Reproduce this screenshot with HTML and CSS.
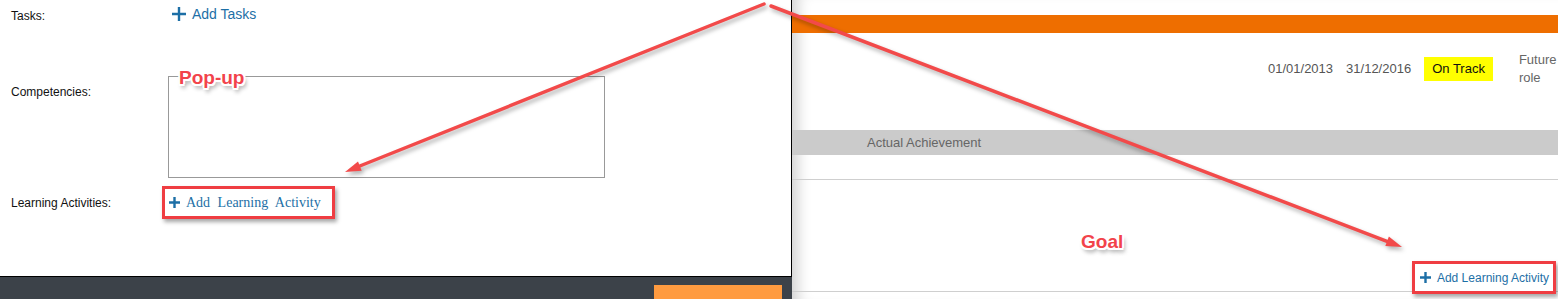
FILE: index.html
```html
<!DOCTYPE html>
<html>
<head>
<meta charset="utf-8">
<link rel="stylesheet" href="styles.css">
</head>
<body>
<div class="screen">
  <section class="popup">
    <div class="popup-body">
      <div class="row row-tasks">
        <div class="label">Tasks:</div>
        <a class="add-link">
          <svg class="plus plus-lg" viewBox="0 0 14 14"><path d="M7 0V14M0 7H14"/></svg>
          <span>Add Tasks</span>
        </a>
      </div>
      <div class="row row-comp">
        <div class="label">Competencies:</div>
        <div class="comp-box"></div>
      </div>
      <div class="row row-learn">
        <div class="label">Learning Activities:</div>
        <a class="add-link serif boxed">
          <svg class="plus plus-sm" viewBox="0 0 11 11"><path d="M5.5 0V11M0 5.5H11"/></svg>
          <span>Add Learning Activity</span>
        </a>
      </div>
    </div>
    <footer class="popup-footer">
      <div class="btn-orange"></div>
    </footer>
  </section>

  <section class="goal">
    <div class="orange-bar"></div>
    <div class="info-row">
      <span class="date">01/01/2013</span>
      <span class="date">31/12/2016</span>
      <span class="status">On Track</span>
      <span class="future">Future<br>role</span>
    </div>
    <div class="grey-bar">Actual Achievement</div>
    <div class="spacer"></div>
    <div class="learn-area">
      <a class="add-link small boxed">
        <svg class="plus plus-sm" viewBox="0 0 11 11"><path d="M5.5 0V11M0 5.5H11"/></svg>
        <span>Add Learning Activity</span>
      </a>
    </div>
  </section>

  <div class="note note-popup">Pop-up</div>
  <div class="note note-goal">Goal</div>

  <svg class="arrows" viewBox="0 0 1558 299" width="1558" height="299">
    <line x1="764" y1="4" x2="359.8" y2="166" />
    <polygon points="345,172 361.7,170.7 358,161.4" />
    <line x1="771" y1="6" x2="1387" y2="241.3" />
    <polygon points="1402,247 1385.3,246 1388.9,236.6" />
  </svg>
</div>
</body>
</html>
```

FILE: styles.css
```css
* { box-sizing: border-box; }
html, body { margin: 0; padding: 0; background: #fff; }
body {
  font-family: Arial, "Liberation Sans", Helvetica, sans-serif;
  width: 1558px;
  height: 299px;
  overflow: hidden;
}
.screen {
  position: relative;
  display: flex;
  width: 1558px;
  height: 299px;
}

/* ---------- Popup (left) ---------- */
.popup {
  width: 792px;
  flex: none;
  display: flex;
  flex-direction: column;
  background: #fff;
}
.popup-body {
  flex: none;
  height: 276px;
  border-right: 1px solid #000;
}
.row {
  display: grid;
  grid-template-columns: 168px 1fr;
  align-items: center;
}
.label {
  padding-left: 11px;
  font-size: 12px;
  color: #111;
}
.row-tasks { margin-top: 4px; height: 20px; }
.row-tasks .label { padding-top: 4px; }
.row-comp { margin-top: 52px; align-items: start; }
.row-comp .label { padding-top: 8px; line-height: 16px; }
.comp-box {
  width: 437px;
  height: 102px;
  border: 1px solid #999;
}
.row-learn { margin-top: 8px; height: 33px; }

.add-link {
  display: inline-flex;
  align-items: center;
  color: #1d6fa6;
  font-size: 14px;
  line-height: 20px;
  justify-self: start;
}
.add-link .plus { stroke: #1d6fa6; stroke-width: 2.4; fill: none; flex: none; }
.plus-lg { width: 14px; height: 14px; margin-left: 4px; margin-right: 6px; }
.plus-sm { width: 11px; height: 11px; margin-right: 6px; }
.add-link.serif {
  font-family: "Liberation Serif", "Times New Roman", serif;
  font-size: 14px;
  word-spacing: 4px;
}
.boxed {
  border: 3px solid #ef3d42;
  box-shadow: 2px 3px 4px rgba(0, 0, 0, 0.35);
  height: 33px;
  padding: 0 10px 0 4px;
}
.row-learn .boxed { margin-left: -6px; padding-right: 11px; }

.popup-footer {
  flex: 1 1 auto;
  min-height: 0;
  overflow: hidden;
  background: #3c4249;
  border-top: 1px solid #000;
  display: flex;
  justify-content: flex-end;
  align-items: flex-start;
  padding-top: 8px;
  padding-right: 10px;
}
.btn-orange {
  width: 128px;
  height: 20px;
  flex: none;
  background: #ff9b40;
}

/* ---------- Goal page (right) ---------- */
.goal {
  flex: 1;
  display: flex;
  flex-direction: column;
  background: #fff;
  box-shadow: inset 16px 0 14px -10px rgba(0, 0, 0, 0.18);
  position: relative;
}
.orange-bar {
  margin-top: 15px;
  height: 18px;
  background: #ee6e00;
}
.info-row {
  height: 97px;
  display: flex;
  align-items: flex-start;
  padding-top: 24px;
  padding-left: 476px;
  font-size: 13px;
  color: #555;
}
.date { line-height: 24px; margin-right: 13px; }
.status {
  background: #ffff00;
  color: #111;
  line-height: 24px;
  padding: 0 8px;
  margin-right: 26px;
}
.future {
  margin-top: -6px;
  line-height: 18px;
  color: #666;
  white-space: nowrap;
}
.grey-bar {
  height: 25px;
  line-height: 25px;
  background: #cbcbcb;
  color: #666;
  font-size: 13px;
  padding-left: 75px;
}
.spacer { height: 24px; }
.learn-area {
  height: 113px;
  border-top: 1px solid #cfcfcf;
  border-bottom: 1px solid #cfcfcf;
  display: flex;
  justify-content: flex-end;
  align-items: flex-end;
  padding-right: 2px;
}
.add-link.small {
  font-size: 12px;
  margin-bottom: -3px;
  background: #fff;
  padding: 0 4px 0 5px;
}

/* ---------- Annotations ---------- */
.note {
  position: absolute;
  font-weight: bold;
  font-size: 19px;
  color: #f2434b;
  line-height: 20px;
  text-shadow:
    -1.5px -1.5px 0 #fff, 1.5px -1.5px 0 #fff, -1.5px 1.5px 0 #fff, 1.5px 1.5px 0 #fff,
    0 -2px 0 #fff, 0 2px 0 #fff, -2px 0 0 #fff, 2px 0 0 #fff,
    2px 4px 4px rgba(0, 0, 0, 0.45);
}
.note-popup { left: 179px; top: 68px; }
.note-goal { left: 1081px; top: 232px; }

.arrows {
  position: absolute;
  left: 0;
  top: 0;
  pointer-events: none;
  filter: drop-shadow(2px 3px 2px rgba(0, 0, 0, 0.3));
}
.arrows line { stroke: #f24a4a; stroke-width: 3.5; stroke-linecap: round; }
.arrows polygon { fill: #f24a4a; }
```
